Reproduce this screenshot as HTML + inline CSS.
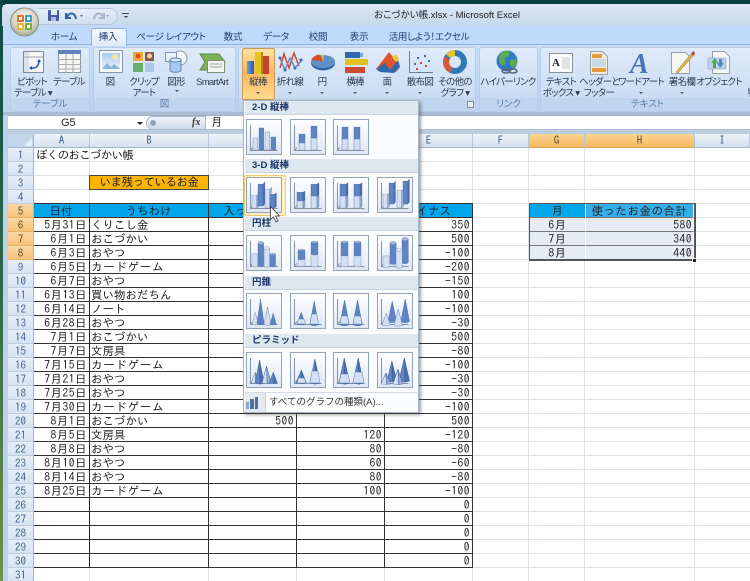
<!DOCTYPE html>
<html lang="ja"><head><meta charset="utf-8"><title>おこづかい帳.xlsx - Microsoft Excel</title>
<style>
html,body{margin:0;padding:0;background:#fff}
#p{position:relative;width:750px;height:581px;overflow:hidden;background:#fff;font-family:"Liberation Sans","IPAGothic",sans-serif}
#p div{box-sizing:border-box}
.a{position:absolute}
.r{position:absolute;white-space:nowrap;font:9.5px/11px "Liberation Sans","Noto Sans CJK JP",sans-serif;font-feature-settings:"palt";letter-spacing:-.7px;color:#2c3a50;text-align:center;transform:translate(-50%,1px)}
.g{position:absolute;top:47px;height:65px;border-radius:3px;background:linear-gradient(#dfeafa 0,#cfe0f5 60%,#c4d8f1 100%);border:1px solid #b6cce8}
.gl{position:absolute;left:0;right:0;bottom:0;height:13px;background:#c0d5ee;color:#5b7ba3;font:9.5px/13px "Liberation Sans","Noto Sans CJK JP",sans-serif;font-feature-settings:"palt";text-align:center}
.tab{position:absolute;top:30px;white-space:nowrap;font:9.5px/13px "Liberation Sans","Noto Sans CJK JP",sans-serif;font-feature-settings:"palt";letter-spacing:-.3px;color:#23406e;transform:translate(-50%,1px)}
.arrow{position:absolute;width:0;height:0;border-left:2px solid transparent;border-right:2px solid transparent;border-top:2px solid #555}
#rh{position:absolute;left:8px;top:148px;width:26px}
#rh div{height:14px;background:linear-gradient(#e6eef8,#d6e3f2);border-right:1px solid #9eb6ce;border-bottom:1px solid #bccde0;text-align:center;font:11px/15px "IPAGothic",sans-serif;color:#3f5f88}
#rh div.o{background:linear-gradient(#fbd9a4,#f8c27a);border-bottom:1px solid #e8b367;color:#5a4a28}
.ch{position:absolute;top:134px;height:14px;background:linear-gradient(#eef3f9,#d5e1ef);border-right:1px solid #b5c6d9;border-bottom:1px solid #9eb6ce;text-align:center;font:11px/14px "IPAGothic",sans-serif;color:#3f5f88}
.ch.o{background:linear-gradient(#fbd293,#f7b961);border-bottom:1px solid #e0a64f;color:#5a4a28}
#grid{position:absolute;left:34px;top:148px;width:716px;height:433px;background-color:#fff;background-image:
repeating-linear-gradient(to bottom,transparent 0,transparent 13px,#dde2ea 13px,#dde2ea 14px),
linear-gradient(#dde2ea,#dde2ea),linear-gradient(#dde2ea,#dde2ea),linear-gradient(#dde2ea,#dde2ea),linear-gradient(#dde2ea,#dde2ea),linear-gradient(#dde2ea,#dde2ea),linear-gradient(#dde2ea,#dde2ea),linear-gradient(#dde2ea,#dde2ea),linear-gradient(#dde2ea,#dde2ea);
background-size:100% 100%,1px 100%,1px 100%,1px 100%,1px 100%,1px 100%,1px 100%,1px 100%,1px 100%;
background-repeat:no-repeat;background-position:0 0,55px 0,174px 0,262px 0,350px 0,438px 0,494px 0,550px 0,660px 0}
table{border-collapse:separate;border-spacing:0;table-layout:fixed;position:absolute}
#t{left:34px;top:203px;width:439px;border-top:1px solid #333}
#t td{height:14px;box-sizing:border-box;padding:3px 2px 0 1px;vertical-align:top;border-right:1px solid #333;border-bottom:1px solid #333;font:11.5px/10px "IPAGothic",sans-serif;letter-spacing:.5px;color:#222;overflow:hidden;white-space:nowrap;text-align:right}
#t td:first-child{border-right:1px solid #222}
#t td:nth-child(2){text-align:left;letter-spacing:0}
#t tr.h td{background:#00a6ea;text-align:center;color:#123;letter-spacing:0}
.k{letter-spacing:.7px}
#s{left:529px;top:203px;width:166px;border:1px solid #555;border-right:2px solid #555;border-bottom:2px solid #555}
#s td{height:14px;box-sizing:border-box;background:#e7ebf5;border-bottom:1px solid #777;border-right:1px solid #fff;font:11.5px/10px "IPAGothic",sans-serif;letter-spacing:.5px;color:#222;padding:3px 1px 0;vertical-align:top;text-align:right;white-space:nowrap;overflow:hidden}
#s td:first-child{text-align:center}
#s tr:last-child td{border-bottom:0;height:13px}
.c{position:absolute;white-space:nowrap;font:11.5px/14px "IPAGothic",sans-serif;color:#222}
#m{position:absolute;left:243px;top:100px;width:176px;height:313px;background:#fbfcfe;border:1px solid #a9b4c4;box-shadow:2px 2px 3px rgba(70,70,70,.5)}
.sec{position:absolute;left:1px;width:173px;height:14px;background:#dde7f0;padding-left:7px;font:bold 9.5px/14px "Liberation Sans","Noto Sans CJK JP",sans-serif;color:#1b3768;border-bottom:1px solid #c8d4e2}
.l{color:#d3e0f3}.d{color:#5f84c4}
</style></head><body><div id="p">

<!-- desktop and frame -->
<div class="a" style="left:0;top:0;width:750px;height:5px;background:#063d3e"></div>
<div class="a" style="left:0;top:0;width:3px;height:581px;background:linear-gradient(#0c4a46,#2e6a46 50%,#70924a)"></div>
<div class="a" style="left:2px;top:4px;width:748px;height:22px;background:linear-gradient(#dbe7f5,#c6d8ec);border-radius:5px 0 0 0"></div>
<div class="a" style="left:3px;top:26px;width:747px;height:555px;background:#bcd2ec"></div>
<div class="a" style="left:3px;top:26px;width:747px;height:19px;background:#bfdafb;border-bottom:1px solid #8db2e3"></div>
<div class="a" style="left:3px;top:45px;width:747px;height:70px;background:linear-gradient(#c9def8,#bad2ef)"></div>
<div class="a" style="left:3px;top:112px;width:747px;height:3px;background:#a9bcd4"></div>

<div class="a" style="left:374px;top:9px;white-space:nowrap;font:9.5px/13px 'Liberation Sans','Noto Sans CJK JP',sans-serif;font-feature-settings:'palt';color:#1c1c1c">おこづかい帳.xlsx - Microsoft Excel</div>

<!-- QAT -->
<div class="a" style="left:38px;top:8px;width:80px;height:17px;border:1px solid #b4c6dc;border-left:0;border-radius:0 9px 9px 0;background:linear-gradient(#e6eef8,#cfdeef)"></div>
<div class="a" style="left:122px;top:13px;width:7px;height:8px;border-top:1px solid #445;"></div>
<div class="arrow" style="left:124px;top:16px;border-top-color:#334"></div>

<!-- tabs -->
<div class="a" style="left:91px;top:28px;width:36px;height:18px;background:linear-gradient(#f4f8fd,#dfeafa);border:1px solid #8fb0dc;border-bottom:0;border-radius:3px 3px 0 0"></div>
<div class="tab" style="left:64px">ホーム</div>
<div class="tab" style="left:108px;color:#15315e">挿入</div>
<div class="tab" style="left:171px">ページ レイアウト</div>
<div class="tab" style="left:233px">数式</div>
<div class="tab" style="left:276px">データ</div>
<div class="tab" style="left:318px">校閲</div>
<div class="tab" style="left:359px">表示</div>
<div class="tab" style="left:429px">活用しよう！エクセル</div>

<!-- groups -->
<div class="g" style="left:10px;width:80px"><div class="gl">テーブル</div></div>
<div class="g" style="left:93px;width:143px"><div class="gl">図</div></div>
<div class="g" style="left:238px;width:238px"><div class="gl"></div></div>
<div class="g" style="left:479px;width:59px"><div class="gl">リンク</div></div>
<div class="g" style="left:540px;width:215px"><div class="gl">テキスト</div></div>
<div class="a" style="left:242px;top:48px;width:33px;height:52px;background:linear-gradient(#fde3a7,#fbb95a 45%,#fdd98f);border:1px solid #c99a5a;border-radius:2px"></div>

<!-- ribbon labels -->
<div class="r" style="left:32px;top:76px">ピボット</div><div class="r" style="left:33px;top:87px">テーブル ▾</div>
<div class="r" style="left:69px;top:76px">テーブル</div>
<div class="r" style="left:110px;top:76px">図</div>
<div class="r" style="left:144px;top:76px">クリップ</div><div class="r" style="left:144px;top:87px">アート</div>
<div class="r" style="left:176px;top:76px">図形</div>
<div class="r" style="left:212px;top:76px">SmartArt</div>
<div class="r" style="left:258px;top:76px">縦棒</div>
<div class="r" style="left:290px;top:76px">折れ線</div>
<div class="r" style="left:322px;top:76px">円</div>
<div class="r" style="left:355px;top:76px">横棒</div>
<div class="r" style="left:387px;top:76px">面</div>
<div class="r" style="left:420px;top:76px">散布図</div>
<div class="r" style="left:455px;top:76px">その他の</div><div class="r" style="left:455px;top:87px">グラフ ▾</div>
<div class="r" style="left:508px;top:76px">ハイパーリンク</div>
<div class="r" style="left:561px;top:76px">テキスト</div><div class="r" style="left:561px;top:87px">ボックス ▾</div>
<div class="r" style="left:599px;top:76px">ヘッダーと</div><div class="r" style="left:599px;top:87px">フッター</div>
<div class="r" style="left:641px;top:76px">ワードアート</div>
<div class="r" style="left:682px;top:76px">署名欄</div>
<div class="r" style="left:719px;top:76px">オブジェクト</div>
<div class="r" style="left:752px;top:87px">特</div>
<div class="arrow" style="left:256px;top:92px"></div><div class="arrow" style="left:288px;top:92px"></div><div class="arrow" style="left:320px;top:92px"></div><div class="arrow" style="left:353px;top:92px"></div><div class="arrow" style="left:385px;top:92px"></div><div class="arrow" style="left:418px;top:92px"></div><div class="arrow" style="left:175px;top:90px"></div><div class="arrow" style="left:639px;top:92px"></div><div class="arrow" style="left:680px;top:92px"></div>

<!-- ribbon icons -->
<svg class="a" style="left:0;top:0" width="750" height="115" viewBox="0 0 750 115">
<defs>
<radialGradient id="ob" cx=".5" cy=".35" r=".7"><stop offset="0" stop-color="#fbf6ea"/><stop offset=".6" stop-color="#d8d3c4"/><stop offset="1" stop-color="#9aa38e"/></radialGradient>
<linearGradient id="bl" x1="0" x2="1" y1="0" y2="0"><stop offset="0" stop-color="#6f9fd8"/><stop offset="1" stop-color="#1f5aa8"/></linearGradient>
<linearGradient id="pic" x1="0" x2="0" y1="0" y2="1"><stop offset="0" stop-color="#a5cdf2"/><stop offset="1" stop-color="#e8f2fb"/></linearGradient>
</defs>
<!-- office button -->
<circle cx="24.500" cy="22" r="14" fill="url(#ob)" stroke="#8a8f80"/>
<rect x="17" y="15" width="7" height="7" rx="1" fill="#e2702c"/><rect x="25" y="15" width="7" height="7" rx="1" fill="#3a9cc8"/><rect x="17" y="23" width="7" height="7" rx="1" fill="#e8b828"/><rect x="25" y="23" width="7" height="7" rx="1" fill="#7cae38"/>
<rect x="19" y="17" width="3" height="3" fill="#fff"/><rect x="27" y="17" width="3" height="3" fill="#fff"/><rect x="19" y="25" width="3" height="3" fill="#fff"/><rect x="27" y="25" width="3" height="3" fill="#fff"/>
<!-- save, undo, redo -->
<rect x="48" y="10" width="11" height="11" rx="1" fill="#4a5aa8"/><rect x="51" y="10" width="6" height="5" fill="#e6ecf6"/><rect x="51" y="17" width="5" height="4" fill="#b3bcd6"/>
<path d="M66 13v5h5M67 17c2-5 8-5 9 2" fill="none" stroke="#2a62b0" stroke-width="2"/><path d="M80 15h3l-1.500 2z" fill="#667"/>
<path d="M104 13v5h-5M103 17c-2-5-8-5-9 2" fill="none" stroke="#a7b5c6" stroke-width="2"/><path d="M106 15h3l-1.500 2z" fill="#99a"/>
<!-- pivot -->
<rect x="23.500" y="51.500" width="20" height="21" fill="#f4f6f8" stroke="#7f8a96"/><rect x="24" y="52" width="5" height="20" fill="#dde3ea"/><line x1="24" y1="57" x2="43" y2="57" stroke="#a0a8b2"/><path d="M30 68c6 1 9-2 9-8" fill="none" stroke="#1d54a8" stroke-width="1.500"/><path d="M37 62l2-3 2 3zM32 66l-3 2 3 2z" fill="#1d54a8"/>
<!-- table -->
<rect x="58.500" y="50.500" width="22" height="22" fill="#f6f6f2" stroke="#8a96a4"/><rect x="58" y="50" width="23" height="4" fill="#5f82b8"/><path d="M58 59.500h23M58 64.500h23M58 69h23M66 54v19M73 54v19" stroke="#a8acb0" fill="none"/>
<!-- picture -->
<rect x="99.500" y="50.500" width="23" height="22" fill="#f4f6fa" stroke="#8a96a8"/><rect x="102" y="53" width="18" height="16" fill="url(#pic)"/><circle cx="115" cy="57" r="3" fill="#f5e6a5"/><path d="M102 69l5-6 4 4 3-3 6 5z" fill="#8fb4dc"/>
<!-- clip -->
<rect x="133" y="52" width="10" height="9" fill="#f2a93c"/><rect x="145" y="52" width="9" height="9" fill="#8a5a48"/><rect x="133" y="63" width="10" height="9" fill="#68b06a"/><rect x="145" y="63" width="9" height="9" fill="#aac8ec"/><circle cx="138" cy="56" r="2.500" fill="#d8561e"/><circle cx="149.500" cy="56" r="2.500" fill="#f0d2a8"/>
<!-- shapes -->
<circle cx="180" cy="58" r="7" fill="#f6f8fb" stroke="#8395ae"/><rect x="165.500" y="52.500" width="11" height="9" fill="#eaf0f8" stroke="#7f92ae"/><path d="M170 60h11v10c0 3-11 3-11 0z" fill="#a9c9ee" stroke="#5e82ae"/><ellipse cx="175.500" cy="60" rx="5.500" ry="2" fill="#dbe9f8" stroke="#5e82ae"/>
<!-- smartart -->
<path d="M200 54h19l6 8-6 8h-19l5-8z" fill="#7eb258" stroke="#5a8a3c"/><rect x="207.500" y="60.500" width="17" height="12" fill="#f3f5f2" stroke="#7f8f7a"/><path d="M210 64h12M210 67h12" stroke="#9aa59a"/>
<!-- column -->
<rect x="247" y="61" width="7" height="13" fill="url(#bl)"/><rect x="255" y="52" width="6" height="22" fill="#e8c21e"/><rect x="261" y="52" width="2" height="22" fill="#b08a10"/><rect x="263" y="56" width="6" height="18" fill="#c8402c"/>
<!-- line -->
<path d="M280 68l4-14 5 14 5-15 5 13" fill="none" stroke="#c9483c" stroke-width="1.500"/><path d="M280 58l5 12 5-12 5 10 7-8" fill="none" stroke="#6b8fc0" stroke-width="1.500"/>
<g fill="#3f68a8"><circle cx="280" cy="58" r="1.500"/><circle cx="285" cy="70" r="1.500"/><circle cx="295" cy="68" r="1.500"/><circle cx="301" cy="60" r="1.500"/></g>
<!-- pie -->
<ellipse cx="323" cy="63" rx="12" ry="7.500" fill="#2f64a8"/><ellipse cx="323" cy="61.500" rx="12" ry="6.500" fill="#5f90c8"/><path d="M323 61.500l-11.500-1.500c1-3 4-5 8-5.500z" fill="#d84a2a"/><path d="M323 61.500l-2-7 3 0z" fill="#e9c42e"/>
<!-- bar -->
<rect x="345" y="52" width="15" height="6" fill="#2f6ab0"/><rect x="345" y="59" width="23" height="6" fill="#e2c220"/><rect x="345" y="67" width="20" height="6" fill="#cf4a32"/><rect x="360" y="53" width="3" height="4" fill="#7fa6d4"/>
<!-- area -->
<path d="M376 69l7-9 6-8 6 7 5 8-4 5z" fill="#e0562a"/><path d="M376 69l9-6 5 7 8-10 2 7-6 6-14-1z" fill="#2f6ab0"/><path d="M392 57l4-3 3 5-3 3z" fill="#e9c83a"/>
<!-- scatter -->
<path d="M409.500 51v21.500H433" fill="none" stroke="#6c7c92"/><g fill="#3f68a8"><rect x="417" y="57" width="2" height="2"/><rect x="424" y="55" width="2" height="2"/><rect x="428" y="60" width="2" height="2"/><rect x="414" y="63" width="2" height="2"/></g><g fill="#cf4a32"><rect x="420" y="62" width="2" height="2"/><rect x="425" y="65" width="2" height="2"/><rect x="416" y="68" width="2" height="2"/></g>
<!-- donut -->
<circle cx="455" cy="62" r="9" fill="none" stroke="#2f78b8" stroke-width="6"/><path d="M447 58a9 9 0 0 0 4 12" fill="none" stroke="#d85a3a" stroke-width="6"/><path d="M448 56a9 9 0 0 1 7-3" fill="none" stroke="#e5c62c" stroke-width="6"/>
<!-- globe -->
<circle cx="507" cy="61" r="10.500" fill="#2f7ac8"/><path d="M499 56c3-5 8-6 11-4l-2 5-4 1 2 5-4 3-3-4zM510 60l6-1 1 5-4 4-3-3z" fill="#5cae4a"/><path d="M502 71a4 2 0 0 1 8 0 4 2 0 0 1-8 0zM509 71a4 2 0 0 1 8 0 4 2 0 0 1-8 0z" fill="none" stroke="#5a6472" stroke-width="1.500"/>
<!-- textbox -->
<rect x="549.500" y="53.500" width="23" height="19" fill="#fbfbfb" stroke="#8a8f98"/><rect x="562" y="57" width="8" height="12" fill="#dfe4ea"/><text x="552" y="66" font-family="Liberation Serif,serif" font-weight="bold" font-size="11" fill="#222">A</text>
<!-- header -->
<path d="M590.500 51.500h12l5 5v18h-17z" fill="#f2ede0" stroke="#9aa0a8"/><rect x="592" y="54" width="10" height="4" fill="#e69a3a"/><rect x="592" y="59" width="14" height="8" fill="#cdd8e6"/><rect x="592" y="68" width="14" height="4" fill="#e69a3a"/>
<!-- wordart -->
<text x="630" y="73" font-family="Liberation Serif,serif" font-style="italic" font-weight="bold" font-size="28" fill="#4a76b8">A</text>
<!-- signature -->
<path d="M671.500 52.500h14l4 4v17h-18z" fill="#f6f6f2" stroke="#9aa0a8"/><path d="M676 72l15-18 2 2-15 17z" fill="#e2b84a" stroke="#8a6a2a" stroke-width=".5"/><path d="M691 53l3-2 1 3-2 2z" fill="#b84a3a"/>
<!-- object -->
<path d="M712.500 51.500h12l5 5v17h-17z" fill="#f6f7f8" stroke="#9aa0a8"/><rect x="708" y="58" width="18" height="11" fill="#bcd2ec" stroke="#7f92ae" stroke-width=".5"/><path d="M715 58l3 5h-2v5h-3v-5h-2z" fill="#4fa84f"/><path d="M720 68l-3-5h2v-4h3v4h2z" fill="#4f88c8"/>
</svg>
<div class="a" style="left:467px;top:101px;width:7px;height:7px;border:1px solid #7f93ad;background:#e6eef8"></div>

<!-- formula bar -->
<div class="a" style="left:8px;top:115px;width:742px;height:15px;background:#fff;border-top:1px solid #9fb2c9;border-bottom:1px solid #a9bdd4"></div>
<div class="a" style="left:8px;top:130px;width:742px;height:4px;background:#bccde2"></div>
<div class="c" style="left:61px;top:116px;font:11px/14px 'Liberation Sans',sans-serif">G5</div>
<div class="arrow" style="left:137px;top:122px;border-left-width:3px;border-right-width:3px;border-top:3px solid #222"></div>
<div class="a" style="left:146px;top:116px;width:60px;height:14px;border-radius:7px 0 0 7px;background:linear-gradient(#eef3f9,#cddcee);border:1px solid #a9bad0"></div>
<div class="a" style="left:150px;top:120px;width:6px;height:6px;border-radius:50%;background:#97a4b2"></div>
<div class="c" style="left:192px;top:116px;font:italic bold 10px/14px 'Liberation Serif',serif;color:#333">fx</div>
<div class="c" style="left:211px;top:116px">月</div>

<!-- sheet -->
<div id="grid"></div>
<div class="a" style="left:8px;top:134px;width:26px;height:14px;background:#c4d6ec;border-right:1px solid #9eb6ce;border-bottom:1px solid #9eb6ce"></div>
<div class="a" style="left:24px;top:138px;width:0;height:0;border-left:8px solid transparent;border-bottom:8px solid #e6eef8"></div>
<div class="ch" style="left:34px;width:56px">A</div>
<div class="ch" style="left:90px;width:119px">B</div>
<div class="ch" style="left:209px;width:88px">C</div>
<div class="ch" style="left:297px;width:88px">D</div>
<div class="ch" style="left:385px;width:88px">E</div>
<div class="ch" style="left:473px;width:56px">F</div>
<div class="ch o" style="left:529px;width:56px">G</div>
<div class="ch o" style="left:585px;width:110px">H</div>
<div class="ch" style="left:695px;width:55px">I</div>
<div id="rh"><div>1</div><div>2</div><div>3</div><div>4</div><div class="o">5</div><div class="o">6</div><div class="o">7</div><div class="o">8</div><div>9</div><div>10</div><div>11</div><div>12</div><div>13</div><div>14</div><div>15</div><div>16</div><div>17</div><div>18</div><div>19</div><div>20</div><div>21</div><div>22</div><div>23</div><div>24</div><div>25</div><div>26</div><div>27</div><div>28</div><div>29</div><div>30</div><div>31</div></div>

<div class="c" style="left:36px;top:149px;letter-spacing:-.7px">ぼくのおこづかい帳</div>
<div class="a" style="left:89px;top:175px;width:120px;height:15px;background:#ffb400;border:1px solid #444;text-align:center;font:11.5px/14px IPAGothic,sans-serif;letter-spacing:-.5px;color:#222">いま残っているお金</div>

<table id="t"><colgroup><col style="width:56px"><col style="width:119px"><col style="width:88px"><col style="width:88px"><col style="width:88px"></colgroup>
<tr class="h"><td>日付<td>うちわけ<td>入ったお金<td>使ったお金<td>マイナス</tr>
<tr><td>5月31日<td>くりこし金<td><td><td>350</tr>
<tr><td>6月1日<td>おこづかい<td><td><td>500</tr>
<tr><td>6月3日<td>おやつ<td><td><td>-100</tr>
<tr><td>6月5日<td><span class="k">カードゲーム</span><td><td><td>-200</tr>
<tr><td>6月7日<td>おやつ<td><td><td>-150</tr>
<tr><td>6月13日<td>買い物おだちん<td><td><td>100</tr>
<tr><td>6月14日<td>ノート<td><td><td>-100</tr>
<tr><td>6月28日<td>おやつ<td><td><td>-30</tr>
<tr><td>7月1日<td>おこづかい<td><td><td>500</tr>
<tr><td>7月7日<td>文房具<td><td><td>-80</tr>
<tr><td>7月15日<td><span class="k">カードゲーム</span><td><td><td>-100</tr>
<tr><td>7月21日<td>おやつ<td><td><td>-30</tr>
<tr><td>7月25日<td>おやつ<td><td><td>-30</tr>
<tr><td>7月30日<td><span class="k">カードゲーム</span><td><td><td>-100</tr>
<tr><td>8月1日<td>おこづかい<td>500<td><td>500</tr>
<tr><td>8月5日<td>文房具<td><td>120<td>-120</tr>
<tr><td>8月8日<td>おやつ<td><td>80<td>-80</tr>
<tr><td>8月10日<td>おやつ<td><td>60<td>-60</tr>
<tr><td>8月14日<td>おやつ<td><td>80<td>-80</tr>
<tr><td>8月25日<td><span class="k">カードゲーム</span><td><td>100<td>-100</tr>
<tr><td>&nbsp;<td><td><td><td>0</tr>
<tr><td>&nbsp;<td><td><td><td>0</tr>
<tr><td>&nbsp;<td><td><td><td>0</tr>
<tr><td>&nbsp;<td><td><td><td>0</tr>
<tr><td>&nbsp;<td><td><td><td>0</tr>
</table>

<table id="s"><colgroup><col style="width:56px"><col style="width:108px"></colgroup>
<tr><td style="background:#00a6ea">月<td style="background:#35ade8;text-align:center">使ったお金の合計</tr>
<tr><td>6月<td>580</tr>
<tr><td>7月<td>340</tr>
<tr><td>8月<td>440</tr>
</table>
<div class="a" style="left:692px;top:258px;width:5px;height:5px;background:#222;border:1px solid #fff"></div>

<!-- chart menu -->
<div id="m">
<div class="sec" style="top:0">2-D 縦棒</div>
<div class="sec" style="top:58px">3-D 縦棒</div>
<div class="sec" style="top:116px">円柱</div>
<div class="sec" style="top:175px">円錐</div>
<div class="sec" style="top:233px">ピラミッド</div>
<div class="a" style="left:1px;top:291px;width:173px;height:1px;background:#d4dbe4"></div>
<div class="a" style="left:1px;top:292px;width:21px;height:19px;background:#e4e9f0;border-right:1px solid #cdd5df"></div>
<div class="c" style="left:25px;top:295px;font:9.5px/13px 'Liberation Sans','Noto Sans CJK JP',sans-serif;color:#333">すべてのグラフの種類(A)...</div>
</div>
<div class="a" style="left:244px;top:175px;width:42px;height:41px;background:#fff1c4;border:1px solid #f0cb6e;border-radius:2px"></div>

<svg class="a" style="left:0;top:0" width="750" height="581" viewBox="0 0 750 581">
<defs>
<linearGradient id="fr" x1="0" x2="0" y1="0" y2="1"><stop offset="0" stop-color="#fff"/><stop offset="1" stop-color="#dde7f4"/></linearGradient>
<g id="f"><rect x=".5" y=".5" width="35" height="35" fill="url(#fr)" stroke="#93a3b8"/><path d="M4.500 6v25.500h27" fill="none" stroke="#8793a4"/><path d="M4 31.500l3-3" stroke="#8793a4" fill="none"/></g>
<g id="b"><rect x="0" y="-20" width="6" height="20" fill="currentColor" stroke="#4b68a0" stroke-width=".4"/></g>
<g id="u"><rect x="0" y="-20" width="6" height="20" fill="currentColor" stroke="#4b68a0" stroke-width=".4"/><path d="M6-20l2-2v20l-2 2z" fill="currentColor" stroke="#4b68a0" stroke-width=".4"/><path d="M6-20l2-2v20l-2 2z" fill="#1c3a78" opacity=".3"/><path d="M0-20l2-2h6l-2 2z" fill="#fff" opacity=".6"/></g>
<g id="y"><path d="M0-20v20a3.500 1.500 0 0 0 7 0v-20z" fill="currentColor" stroke="#4b68a0" stroke-width=".4"/><ellipse cx="3.500" cy="-20" rx="3.500" ry="1.500" fill="currentColor" stroke="#4b68a0" stroke-width=".4"/><ellipse cx="3.500" cy="-20" rx="3.500" ry="1.500" fill="#fff" opacity=".4"/></g>
<g id="o"><path d="M3.500-20L0 0a3.500 1.500 0 0 0 7 0z" fill="currentColor" stroke="#4b68a0" stroke-width=".4"/></g>
<g id="q"><path d="M3.500-20L0 0l4 1z" fill="currentColor" stroke="#4b68a0" stroke-width=".4"/><path d="M3.500-20L7 0l-3 1z" fill="currentColor" stroke="#4b68a0" stroke-width=".4"/><path d="M3.500-20L7 0l-3 1z" fill="#1c3a78" opacity=".3"/></g>
<!-- variants: -->
<g id="c1"><use href="#b" transform="translate(7,31) scale(.8,.6)" class="l"/><use href="#b" transform="translate(13,31) scale(.8,1.1)" class="d"/><use href="#b" transform="translate(19,31) scale(.8,.9)" class="l"/><use href="#b" transform="translate(25,31) scale(.8,.65)" class="d"/></g>
<g id="c2"><use href="#b" transform="translate(9,31) scale(1,.35)" class="l"/><use href="#b" transform="translate(9,24) scale(1,.45)" class="d"/><use href="#b" transform="translate(21,31) scale(1,.6)" class="l"/><use href="#b" transform="translate(21,19) scale(1,.6)" class="d"/></g>
<g id="c3"><use href="#b" transform="translate(9,31) scale(1,.55)" class="l"/><use href="#b" transform="translate(9,20) scale(1,.6)" class="d"/><use href="#b" transform="translate(21,31) scale(1,.55)" class="l"/><use href="#b" transform="translate(21,20) scale(1,.6)" class="d"/></g>
<g id="u1"><use href="#u" transform="translate(6,31) scale(.8,.65)" class="l"/><use href="#u" transform="translate(12,29) scale(.85,1.1)" class="d"/><use href="#u" transform="translate(19,31) scale(.8,.95)" class="l"/><use href="#u" transform="translate(24,31) scale(.8,.7)" class="d"/></g>
<g id="u2"><use href="#u" transform="translate(7,31) scale(1,.35)" class="l"/><use href="#u" transform="translate(7,24) scale(1,.45)" class="d"/><use href="#u" transform="translate(21,31) scale(1,.6)" class="l"/><use href="#u" transform="translate(21,19) scale(1,.6)" class="d"/></g>
<g id="u3"><use href="#u" transform="translate(7,31) scale(1,.6)" class="l"/><use href="#u" transform="translate(7,19) scale(1,.6)" class="d"/><use href="#u" transform="translate(21,31) scale(1,.6)" class="l"/><use href="#u" transform="translate(21,19) scale(1,.6)" class="d"/></g>
<g id="u4"><use href="#u" transform="translate(12,27) scale(.8,1.05)" class="d"/><use href="#u" transform="translate(26,27) scale(.8,1.15)" class="d"/><use href="#u" transform="translate(6,31) scale(.8,.7)" class="l"/><use href="#u" transform="translate(20,31) scale(.8,.9)" class="l"/></g>
<g id="y1"><use href="#y" transform="translate(6,31) scale(.8,.6)" class="l"/><use href="#y" transform="translate(12,30) scale(.8,1.1)" class="d"/><use href="#y" transform="translate(18,31) scale(.8,.9)" class="l"/><use href="#y" transform="translate(24,31) scale(.8,.6)" class="d"/></g>
<g id="y2"><use href="#y" transform="translate(8,31) scale(1,.35)" class="l"/><use href="#y" transform="translate(8,24) scale(1,.45)" class="d"/><use href="#y" transform="translate(21,31) scale(1,.6)" class="l"/><use href="#y" transform="translate(21,19) scale(1,.6)" class="d"/></g>
<g id="y3"><use href="#y" transform="translate(8,31) scale(1,.55)" class="l"/><use href="#y" transform="translate(8,20) scale(1,.65)" class="d"/><use href="#y" transform="translate(21,31) scale(1,.55)" class="l"/><use href="#y" transform="translate(21,20) scale(1,.65)" class="d"/></g>
<g id="y4"><use href="#y" transform="translate(13,28) scale(.9,1)" class="d"/><use href="#y" transform="translate(25,27) scale(.9,1.15)" class="d"/><use href="#y" transform="translate(6,32) scale(.9,.55)" class="l"/><use href="#y" transform="translate(19,32) scale(.9,.85)" class="l"/></g>
<g id="o1"><use href="#o" transform="translate(6,31) scale(.9,.6)" class="l"/><use href="#o" transform="translate(11,30) scale(1,1.2)" class="d"/><use href="#o" transform="translate(18,31) scale(1,.85)" class="l"/><use href="#o" transform="translate(24,31) scale(.9,.55)" class="d"/></g>
<g id="o2"><use href="#o" transform="translate(7,31) scale(1.2,.6)" class="d"/><use href="#o" transform="translate(20,31) scale(1.2,1.15)" class="d"/><path d="M7 31h8.500l-1.500-5h-5.500zM20 31h8.500l-1.700-10h-5z" fill="#d3e0f3" stroke="#4b68a0" stroke-width=".4"/></g>
<g id="o3"><use href="#o" transform="translate(7,31) scale(1.3,1.2)" class="d"/><use href="#o" transform="translate(20,31) scale(1.3,1.2)" class="d"/><path d="M7 31h9l-1.500-8h-6zM20 31h9l-1.500-8h-6z" fill="#d3e0f3" stroke="#4b68a0" stroke-width=".4"/></g>
<g id="o4"><use href="#o" transform="translate(11,28) scale(1.2,1)" class="d"/><use href="#o" transform="translate(24,28) scale(1.2,1.1)" class="d"/><use href="#o" transform="translate(5,32) scale(1.2,.6)" class="l"/><use href="#o" transform="translate(17,32) scale(1.2,.8)" class="l"/></g>
<g id="q1"><use href="#q" transform="translate(5,31) scale(1.2,.55)" class="l"/><use href="#q" transform="translate(9,31) scale(1.3,1.15)" class="d"/><use href="#q" transform="translate(16,31) scale(1.3,.85)" class="l"/><use href="#q" transform="translate(23,31) scale(1.2,.55)" class="d"/></g>
<g id="q2"><use href="#q" transform="translate(6,31) scale(1.5,.65)" class="d"/><use href="#q" transform="translate(20,31) scale(1.4,1.2)" class="d"/><path d="M7 31h9l-1.500-5h-6zM20 31h10l-2-12h-6z" fill="#d3e0f3" stroke="#4b68a0" stroke-width=".4"/></g>
<g id="q3"><use href="#q" transform="translate(6,31) scale(1.5,1.25)" class="d"/><use href="#q" transform="translate(20,31) scale(1.5,1.25)" class="d"/><path d="M6 31h11l-2-9h-7zM20 31h11l-2-11h-7z" fill="#d3e0f3" stroke="#4b68a0" stroke-width=".4"/></g>
<g id="q4"><use href="#q" transform="translate(10,29) scale(1.4,1)" class="d"/><use href="#q" transform="translate(22,29) scale(1.5,1.15)" class="d"/><use href="#q" transform="translate(4,32) scale(1.4,.55)" class="l"/><use href="#q" transform="translate(16,32) scale(1.4,.75)" class="l"/></g>
</defs>
<g transform="translate(246,119)"><use href="#f"/><use href="#c1"/></g><g transform="translate(290,119)"><use href="#f"/><use href="#c2"/></g><g transform="translate(333,119)"><use href="#f"/><use href="#c3"/></g>
<g transform="translate(246,177)"><use href="#f"/><use href="#u1"/></g><g transform="translate(290,177)"><use href="#f"/><use href="#u2"/></g><g transform="translate(333,177)"><use href="#f"/><use href="#u3"/></g><g transform="translate(377,177)"><use href="#f"/><use href="#u4"/></g>
<g transform="translate(246,235)"><use href="#f"/><use href="#y1"/></g><g transform="translate(290,235)"><use href="#f"/><use href="#y2"/></g><g transform="translate(333,235)"><use href="#f"/><use href="#y3"/></g><g transform="translate(377,235)"><use href="#f"/><use href="#y4"/></g>
<g transform="translate(246,293)"><use href="#f"/><use href="#o1"/></g><g transform="translate(290,293)"><use href="#f"/><use href="#o2"/></g><g transform="translate(333,293)"><use href="#f"/><use href="#o3"/></g><g transform="translate(377,293)"><use href="#f"/><use href="#o4"/></g>
<g transform="translate(246,352)"><use href="#f"/><use href="#q1"/></g><g transform="translate(290,352)"><use href="#f"/><use href="#q2"/></g><g transform="translate(333,352)"><use href="#f"/><use href="#q3"/></g><g transform="translate(377,352)"><use href="#f"/><use href="#q4"/></g>
<!-- all chart types icon -->
<g transform="translate(246,397)"><rect x="0" y="5" width="3" height="7" fill="#8fa8cc"/><rect x="4" y="2" width="4" height="10" fill="#4f6f9f"/><rect x="9" y="0" width="3" height="12" fill="#4f6f9f"/></g>
<!-- cursor -->
<path d="M270.500 206.500v13l3-2.500 2.500 5 2-1-2.500-5h4z" fill="#fff" stroke="#333" stroke-width=".8"/>
</svg>
</div></body></html>
